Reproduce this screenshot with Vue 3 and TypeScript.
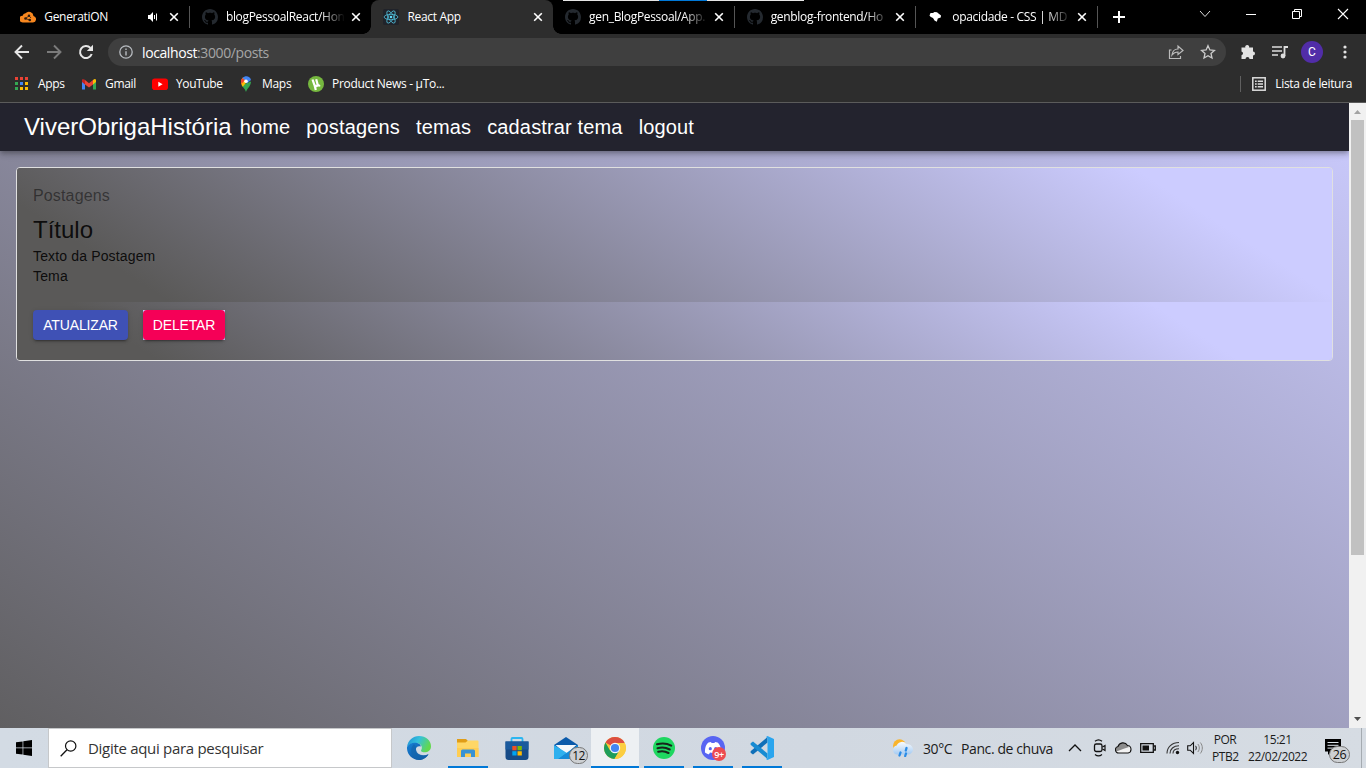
<script setup lang="ts">
interface Tab {
  title: string
  icon: 'cloud' | 'github' | 'react' | 'mdn'
  active?: boolean
  audio?: boolean
  divider?: boolean
}

const tabs: Tab[] = [
  { title: 'GeneratiON', icon: 'cloud', audio: true, divider: true },
  { title: 'blogPessoalReact/Hon', icon: 'github' },
  { title: 'React App', icon: 'react', active: true },
  { title: 'gen_BlogPessoal/App.', icon: 'github', divider: true },
  { title: 'genblog-frontend/Ho', icon: 'github', divider: true },
  { title: 'opacidade - CSS | MD', icon: 'mdn', divider: true },
]

const appDots = ['#ea4335', '#ea4335', '#ea4335', '#34a853', '#4285f4', '#fbbc05', '#34a853', '#fbbc05', '#fbbc05']
const links: string[] = ['home', 'postagens', 'temas', 'cadastrar tema', 'logout']
const githubPath =
  'M8 0C3.58 0 0 3.58 0 8c0 3.54 2.29 6.53 5.47 7.59.4.07.55-.17.55-.38 0-.19-.01-.82-.01-1.49-2.01.37-2.53-.49-2.69-.94-.09-.23-.48-.94-.82-1.13-.28-.15-.68-.52-.01-.53.63-.01 1.08.58 1.23.82.72 1.21 1.87.87 2.33.66.07-.52.28-.87.51-1.07-1.78-.2-3.64-.89-3.64-3.95 0-.87.31-1.59.82-2.15-.08-.2-.36-1.02.08-2.12 0 0 .67-.21 2.2.82.64-.18 1.32-.27 2-.27s1.36.09 2 .27c1.53-1.04 2.2-.82 2.2-.82.44 1.1.16 1.92.08 2.12.51.56.82 1.27.82 2.15 0 3.07-1.87 3.75-3.65 3.95.29.25.54.73.54 1.48 0 1.07-.01 1.93-.01 2.2 0 .21.15.46.55.38A8.01 8.01 0 0 0 16 8c0-4.42-3.58-8-8-8z'
</script>

<template>
  <div class="screen">
    <header class="tabstrip">
      <div v-for="tab in tabs" :key="tab.title" class="tab" :class="{ active: tab.active, divider: tab.divider }">
        <svg v-if="tab.icon === 'cloud'" class="fav" viewBox="0 0 16 16">
          <path d="M3 13.500A3.400 3.400 0 0 1 2.600 6.700 3.400 3.400 0 0 1 5.500 4.200 4.600 4.600 0 0 1 13.500 7 3.300 3.300 0 0 1 13 13.500z" fill="#f7871f" />
          <path d="M5.500 9.500L9 6.800L11 9M5.500 9.500L9.500 11" fill="none" stroke="#2b1b10" stroke-width=".8" />
          <circle cx="5.500" cy="9.500" r="1.300" fill="#2b1b10" /><circle cx="9" cy="6.800" r="1.200" fill="#2b1b10" /><circle cx="9.800" cy="11" r="1.300" fill="#2b1b10" />
        </svg>
        <svg v-else-if="tab.icon === 'github'" class="fav" viewBox="0 0 16 16"><path :d="githubPath" fill="#24292f" /></svg>
        <svg v-else-if="tab.icon === 'react'" class="fav" viewBox="0 0 16 16">
          <rect width="16" height="16" rx="1.500" fill="#20232a" />
          <g fill="none" stroke="#50bfdb" stroke-width=".8">
            <ellipse cx="8" cy="8" rx="6.900" ry="2.700" /><ellipse cx="8" cy="8" rx="6.900" ry="2.700" transform="rotate(60 8 8)" /><ellipse cx="8" cy="8" rx="6.900" ry="2.700" transform="rotate(120 8 8)" />
          </g>
          <circle cx="8" cy="8" r="1.300" fill="#61dafb" />
        </svg>
        <svg v-else class="fav" viewBox="0 0 16 16"><path d="M1.500 6.500L2.500 4L5 4L6.500 3L9 3.300L10.500 4.500L13 6.500L12.700 8.500L9.800 9.500L8.800 12.800L6.500 11.500L5 9L2.500 7.800z" fill="#fff" /></svg>
        <span class="tab-title" :class="{ fade: !tab.active && !tab.audio }">{{ tab.title }}</span>
        <svg v-if="tab.audio" class="audio" viewBox="0 0 12 12">
          <path d="M1 4h2l3-3v10L3 8H1z" fill="#fff" /><path d="M7.500 4v4M9.500 2.500v7" stroke="#fff" stroke-width="1" />
        </svg>
        <svg class="close" viewBox="0 0 10 10"><path d="M1.200 1.200L8.800 8.800M8.800 1.200L1.200 8.800" stroke="#fff" stroke-width="1.600" /></svg>
      </div>
      <svg class="plus" viewBox="0 0 12 12"><path d="M6 0v12M0 6h12" stroke="#fff" stroke-width="2" /></svg>
      <div class="window-controls">
        <svg viewBox="0 0 12 12"><path d="M1 3l5 5.500L11 3" fill="none" stroke="#ddd" /></svg>
        <svg viewBox="0 0 12 12"><path d="M1 6.500h10" stroke="#fff" /></svg>
        <svg viewBox="0 0 12 12"><path d="M1.500 3.500h7v7h-7zM3.500 3.500v-2h7v7h-2" fill="none" stroke="#fff" /></svg>
        <svg viewBox="0 0 12 12"><path d="M1 1l10 10M11 1L1 11" stroke="#fff" stroke-width="1.100" /></svg>
      </div>
      <div class="sliver"></div>
    </header>

    <div class="toolbar">
      <svg class="nav-ic" viewBox="0 0 16 16"><path d="M15 8H2M8 1.500L1.500 8L8 14.500" fill="none" stroke="#e6e6e6" stroke-width="1.900" /></svg>
      <svg class="nav-ic" viewBox="0 0 16 16"><path d="M1 8h13M8 1.500L14.500 8L8 14.500" fill="none" stroke="#7b7b7b" stroke-width="1.900" /></svg>
      <svg class="nav-ic" viewBox="0 0 16 16"><path d="M13.700 10A6 6 0 1 1 12.400 3.900" fill="none" stroke="#e6e6e6" stroke-width="2" /><path d="M15 .8V7H8.800z" fill="#e6e6e6" /></svg>
      <div class="omnibox">
        <svg class="info" viewBox="0 0 14 14"><circle cx="7" cy="7" r="6.200" fill="none" stroke="#b8bcc1" stroke-width="1.300" /><path d="M7 6.200v4.300M7 3.400v1.500" stroke="#b8bcc1" stroke-width="1.400" /></svg>
        <span class="url"><b>localhost</b>:3000/posts</span>
        <svg class="share" viewBox="0 0 16 16"><path d="M3.500 6H1.500v8.500h11V12" fill="none" stroke="#bbb" stroke-width="1.200" /><path d="M4 11c.5-4 3-6 6-6V2l5 4.500L10 10.500V8C7.500 8 5.500 9 4 11z" fill="none" stroke="#bbb" stroke-width="1.200" /></svg>
        <svg class="star" viewBox="0 0 16 16"><path d="M8 1.700l1.900 4.200 4.500.5-3.400 3 1 4.600L8 11.700 4 14l1-4.600-3.400-3 4.500-.5z" fill="none" stroke="#ccc" stroke-width="1.300" /></svg>
      </div>
      <svg class="ext" viewBox="0 0 16 16"><path d="M1.500 3.500h3.800a2 2 0 1 1 3.800 0h3.900v3.900a2 2 0 1 1 0 4V15H9.500a2 2 0 0 0-4 0h-4v-3.700a2 2 0 0 0 0-3.900z" fill="#e2e2e2" /></svg>
      <svg class="media" viewBox="0 0 16 14"><path d="M0 2h10M0 6h10M0 10h6" stroke="#ddd" stroke-width="1.700" /><path d="M12.500 11V2H16" fill="none" stroke="#ddd" stroke-width="1.800" /><circle cx="11" cy="11" r="2.400" fill="#ddd" /></svg>
      <div class="profile">C</div>
      <svg class="menu" viewBox="0 0 4 14"><g fill="#e2e2e2"><circle cx="2" cy="2" r="1.600" /><circle cx="2" cy="7" r="1.600" /><circle cx="2" cy="12" r="1.600" /></g></svg>
    </div>

    <div class="bookmarks">
      <div class="bm apps"><span class="dots"><i v-for="(c, i) in appDots" :key="i" :style="{ background: c }"></i></span><span>Apps</span></div>
      <div class="bm gmail">
        <svg viewBox="0 0 16 16"><path d="M1 3.500v10h3V6z" fill="#4285f4" /><path d="M12 6v7.500h3v-10z" fill="#34a853" /><path d="M1 3.500V6l3 2.500V4L3 3.200z" fill="#c5221f" /><path d="M4 4l4 3.200L12 4v4.500l-4 3-4-3z" fill="#ea4335" /><path d="M12 4v4.500L15 6V3.600L13.500 3z" fill="#fbbc04" /></svg><span>Gmail</span>
      </div>
      <div class="bm youtube">
        <svg viewBox="0 0 16 16"><rect x="0" y="2.500" width="16" height="11.500" rx="2.800" fill="#f00" /><path d="M6.300 5.800v5L10.600 8.300z" fill="#fff" /></svg><span>YouTube</span>
      </div>
      <div class="bm maps">
        <svg viewBox="0 0 16 16"><path d="M3.500 9C5 11.500 7 12.500 8 16c1-3.500 5-6 5-10.500L9 7z" fill="#34a853" /><path d="M3 6c0 2 .8 3.400 1.800 4.700L9.500 5 5 1.500C3.800 2.500 3 4 3 6z" fill="#fbbc04" /><path d="M3 5.500C3 4 3.700 2.700 4.500 2L7 4 3.500 8z" fill="#ea4335" /><path d="M4.500 2C7-.8 12-.4 13 4L9 7.500 7 4z" fill="#4285f4" /><circle cx="8" cy="5.200" r="1.800" fill="#fff" /></svg><span>Maps</span>
      </div>
      <div class="bm utorrent">
        <svg viewBox="0 0 16 16"><circle cx="8" cy="8" r="8" fill="#76b83f" /><path d="M4.500 3.500l1.800 5.200c.8 2.200 3.600 1.600 3.200-.6L8.200 3.300M9.300 7.500c.6 2 1.600 2.500 2.700 1.700M6.500 9l1.300 5" fill="none" stroke="#fff" stroke-width="2.200" /></svg><span>Product News - µTo...</span>
      </div>
      <div class="reading">
        <svg viewBox="0 0 14 14"><rect x=".8" y=".8" width="12.400" height="12.400" fill="none" stroke="#ddd" stroke-width="1.500" /><path d="M3 4.300h1.700M3 7h1.700M3 9.700h1.700M5.700 4.300h5.300M5.700 7h5.300M5.700 9.700h5.300" stroke="#ddd" stroke-width="1.500" /></svg>
        <span>Lista de leitura</span>
      </div>
    </div>

    <div class="viewport">
      <div class="page">
        <nav class="appbar">
          <span class="brand">ViverObrigaHistória</span>
          <a v-for="link in links" :key="link">{{ link }}</a>
        </nav>
        <main class="main">
          <article class="card">
            <div class="card-content">
              <p class="kicker">Postagens</p>
              <h2>Título</h2>
              <p>Texto da Postagem</p>
              <p>Tema</p>
            </div>
            <div class="card-actions">
              <button class="btn primary">ATUALIZAR</button>
              <span class="delete-wrap"><button class="btn secondary">DELETAR</button></span>
            </div>
          </article>
        </main>
      </div>
      <div class="scrollbar">
        <svg viewBox="0 0 17 17"><path d="M5 11l3.500-4L12 11z" fill="#a3a3a3" /></svg>
        <div class="thumb"></div>
        <svg class="down" viewBox="0 0 17 17"><path d="M5 6l3.500 4L12 6z" fill="#505050" /></svg>
      </div>
    </div>

    <footer class="taskbar">
      <div class="start"><svg viewBox="0 0 16 16"><path d="M0 2.300l6.600-.9v6.200H0zM7.300 1.300L16 0v7.600H7.300zM0 8.300h6.600v6.300L0 13.700zM7.300 8.300H16V16l-8.700-1.300z" fill="#000" /></svg></div>
      <div class="search">
        <svg viewBox="0 0 17 17"><circle cx="10.700" cy="6" r="5.200" fill="none" stroke="#111" stroke-width="1.200" /><path d="M7 9.800L.7 16.200" stroke="#111" stroke-width="1.300" /></svg>
        <span>Digite aqui para pesquisar</span>
      </div>
      <div class="tasks">
        <div class="task">
          <svg viewBox="0 0 24 24">
            <defs>
              <linearGradient id="edgeTop" x1="0" y1="0" x2="1" y2=".4"><stop offset="0" stop-color="#1c8ad4" /><stop offset=".5" stop-color="#35c1dc" /><stop offset="1" stop-color="#62d84f" /></linearGradient>
              <linearGradient id="edgeLow" x1="0" y1="0" x2="1" y2="1"><stop offset="0" stop-color="#1683d8" /><stop offset="1" stop-color="#124a91" /></linearGradient>
            </defs>
            <path d="M0 11C1 4 6 0 12 0c7 0 12 4.500 12 10.200 0 4-3 6-6.500 6-3 0-4.200-1.400-3-2.800C16 10 13 7 9 7 5 7 1.500 8.500 0 11z" fill="url(#edgeTop)" />
            <path d="M0 11C2 7.500 5.500 6.300 9 6.800c3 .4 4.600 2 5 3.700C10 9.500 8.500 12 9 14.500c.7 4 6 6.500 12.500 3.700-.8 2-5 5.800-9.500 5.800C5 24-.5 18 0 11z" fill="url(#edgeLow)" />
            <path d="M7 8c-4 4-4 11 2 15.500 6 1.500 10-1.500 12.500-5.300C15 21 8 18 9 11z" fill="#1467ae" opacity=".7" />
          </svg>
        </div>
        <div class="task open">
          <svg viewBox="0 0 24 24"><path d="M1 3h9l2 2v4H1z" fill="#e09d17" /><path d="M1 6.500h8.500L12 4.500h9.500a1 1 0 0 1 1 1V21H1z" fill="#ffd766" /><path d="M1 12h21.500v9H1z" fill="#ffcd52" /><path d="M5 21v-6a1.500 1.500 0 0 1 1.500-1.500h11A1.500 1.500 0 0 1 19 15v6h-4v-3.500H9V21z" fill="#3892d4" /></svg>
        </div>
        <div class="task">
          <svg viewBox="0 0 24 24"><path d="M6.500 6V3a1 1 0 0 1 1-1h9a1 1 0 0 1 1 1v3" fill="none" stroke="#2cb6f0" stroke-width="1.800" /><path d="M.5 5.500h23V21a3 3 0 0 1-3 3h-17a3 3 0 0 1-3-3z" fill="#174b87" /><path d="M.5 5.500h23v8H.5z" fill="#1b5a9d" /><path d="M7.300 10h4.300v4.300H7.300z" fill="#f25022" /><path d="M12.500 10h4.300v4.300h-4.300z" fill="#7fba00" /><path d="M7.300 15.200h4.300v4.300H7.300z" fill="#00a4ef" /><path d="M12.500 15.200h4.300v4.300h-4.300z" fill="#ffb900" /></svg>
        </div>
        <div class="task">
          <svg viewBox="0 0 24 24"><path d="M0 9L12 1l12 8v14H0z" fill="#0b5aaa" /><path d="M1.500 9h21L12 18z" fill="#f4f7fa" /><path d="M0 9l13 8L5 23H0z" fill="#2eb0ee" /><path d="M24 9L4 23h20z" fill="#168bd8" /></svg>
          <span class="count mail">12</span>
        </div>
        <div class="task open current">
          <svg viewBox="0 0 24 24"><circle cx="12" cy="12" r="11" fill="#f9c938" /><path d="M12 12L2.470 6.500A11 11 0 0 1 21.530 6.500L21 7H12z" fill="#dc4e41" /><path d="M2.470 6.500A11 11 0 0 0 11.500 23l5-8.500L12 12 7 14.500z" fill="#1e9d5a" /><path d="M12 7h9.700a11 11 0 0 1-10.200 16l5-8.500z" fill="#fcce41" /><circle cx="12" cy="12" r="5.200" fill="#f4f7fc" /><circle cx="12" cy="12" r="4.100" fill="#4486f2" /></svg>
        </div>
        <div class="task open">
          <svg viewBox="0 0 24 24"><circle cx="12" cy="12" r="11" fill="#1ed760" /><path d="M5 8.300c5-1.400 10-1 14.200 1.300M5.500 12.200c4-1.200 8.500-.8 12.200 1.300M6.200 15.800c3.700-1 7-.7 10.300 1.200" fill="none" stroke="#17251b" stroke-width="2.100" stroke-linecap="round" /></svg>
        </div>
        <div class="task open">
          <svg viewBox="0 0 24 24"><circle cx="12" cy="12" r="12" fill="#5865f2" /><path d="M7.500 6.500C5 8 3.800 12.500 4 16.500c1.500 1.200 3 1.700 4 1.800l1-1.700c2 .6 4 .6 6 0l1 1.700c1-.1 2.500-.6 4-1.800.2-4-1-8.500-3.500-10L14 6l-.5 1h-3L10 6z" fill="#fff" /><circle cx="9.300" cy="12.700" r="1.600" fill="#5865f2" /><circle cx="14.700" cy="12.700" r="1.600" fill="#5865f2" /></svg>
          <span class="count discord">9+</span>
        </div>
        <div class="task open">
          <svg viewBox="0 0 24 24"><path d="M17.500 1v5.600L3 18.500.6 16.800v-1.500z" fill="#0f6fb8" /><path d="M.6 8.700v-1.500L3 5.500l14.500 12V23z" fill="#178bd2" /><path d="M17.500 0L24 3v18l-6.500 3-1.500-1 1.500-1V2L16 1z" fill="#2aa5ee" /></svg>
        </div>
      </div>
      <div class="tray">
        <svg class="weather" viewBox="0 0 22 18">
          <defs><linearGradient id="cloud" x1="0" y1="0" x2="0" y2="1"><stop offset="0" stop-color="#f8fbff" /><stop offset="1" stop-color="#a5cbf2" /></linearGradient></defs>
          <circle cx="7.500" cy="6.800" r="6.500" fill="#f9b42c" /><path d="M5.500 15.500a4.500 4.500 0 0 1-.8-8.900A5.500 5.500 0 0 1 14.500 5.300 5.200 5.200 0 0 1 17 15.500z" fill="url(#cloud)" /><path d="M8.500 13.500l-1 3M14.500 9l-.7 2.500M14 14.500l-.8 2.500" stroke="#2b8ce6" stroke-width="2.300" stroke-linecap="round" />
        </svg>
        <span class="temp">30°C</span><span class="forecast">Panc. de chuva</span>
        <svg class="chev" viewBox="0 0 14 8"><path d="M1 7l6-6 6 6" fill="none" stroke="#111" stroke-width="1.300" /></svg>
        <svg class="meet" viewBox="0 0 14 18"><rect x="1.500" y="5" width="7.500" height="7.500" rx="1.800" fill="none" stroke="#111" stroke-width="1.300" /><path d="M9.500 8l2.500-1.500v5L9.500 10M2 2.200c2-1.600 5-1.600 7 0M2 15.500c2 1.600 5 1.600 7 0" fill="none" stroke="#111" stroke-width="1.200" /></svg>
        <svg class="onedrive" viewBox="0 0 17 12"><path d="M4 11A3.300 3.300 0 0 1 3 4.500 5.200 5.200 0 0 1 12.500 3.500 3.800 3.800 0 0 1 13 11z" fill="#f2f2f2" /><path d="M1.500 9.500A3.300 3.300 0 0 1 3 4.500 5.200 5.200 0 0 1 12.500 3.500L14 5 8 7z" fill="#8c8c8c" /><path d="M4 11A3.300 3.300 0 0 1 3 4.500 5.200 5.200 0 0 1 12.500 3.500 3.800 3.800 0 0 1 13 11z" fill="none" stroke="#111" stroke-width="1.100" /></svg>
        <svg class="battery" viewBox="0 0 16 10"><path d="M.7.700h12.600v8.600H.7zM14 3h1.300v4H14" fill="none" stroke="#111" stroke-width="1.300" /><path d="M2.500 2.500H9v5H2.500z" fill="#111" /></svg>
        <svg class="wifi" viewBox="0 0 14 14"><g fill="none" stroke="#333" stroke-width="1.100"><path d="M1 12.500C1 6 6 1.500 13 1.500M4 12.500c0-4.500 3.500-7.700 9-7.700M7 12.500c0-3 2-4.700 6-4.700" /></g><circle cx="11.500" cy="11.500" r="1.700" fill="#111" /></svg>
        <svg class="volume" viewBox="0 0 17 14"><path d="M.7 4.800h2.500L6.500 1.500v11L3.200 9.200H.7z" fill="none" stroke="#111" stroke-width="1.100" /><path d="M8.500 4.800c1 1.200 1 3.200 0 4.400" fill="none" stroke="#111" /><path d="M10.800 3c2 2.300 2 5.700 0 8M13.300 1.500c2.700 3.200 2.700 7.800 0 11" fill="none" stroke="#888" /></svg>
        <div class="stack lang"><span>POR</span><span>PTB2</span></div>
        <div class="stack clock"><span>15:21</span><span>22/02/2022</span></div>
        <div class="notice">
          <svg viewBox="0 0 16 16"><path d="M0 0h16v12.500H6L3 16v-3.500H0z" fill="#000" /><path d="M2.500 3.500h11M2.500 6.300h11M2.500 9.100h7" stroke="#dce3ea" stroke-width="1" /></svg>
          <span class="count bell">26</span>
        </div>
        <div class="peek"></div>
      </div>
    </footer>
  </div>
</template>

<style>
body { margin: 0; overflow: hidden; }
</style>

<style scoped>
* { box-sizing: border-box; }
.screen { width: 1366px; height: 768px; display: flex; flex-direction: column; overflow: hidden; font-family: "Open Sans", "Noto Sans", sans-serif; font-size: 12px; color: #fff; }
svg { display: block; flex: none; }
.tabstrip { height: 34px; background: #000; display: flex; align-items: center; padding-left: 8.300px; position: relative; flex: none; }
.tab { width: 181.600px; height: 34px; display: flex; align-items: center; padding: 0 10px 0 12px; position: relative; flex: none; }
.tab.active { background: #2d2d2d; border-radius: 8px 8px 0 0; z-index: 1; }
.tab.active::before, .tab.active::after { content: ""; position: absolute; bottom: 0; width: 8px; height: 8px; }
.tab.active::before { left: -8px; background: radial-gradient(circle at 0 0, transparent 7.500px, #2d2d2d 8px); }
.tab.active::after { right: -8px; background: radial-gradient(circle at 100% 0, transparent 7.500px, #2d2d2d 8px); }
.tab.divider { border-right: 1px solid #4b4b4b; border-image: linear-gradient(transparent 7px, #555 7px, #555 27px, transparent 27px) 1; border-width: 0 1px 0 0; }
.fav { width: 16px; height: 16px; }
.tab-title { width: 119px; margin-left: 8px; overflow: hidden; white-space: nowrap; letter-spacing: -.32px; line-height: 18px; flex: none; }
.tab:has(.audio) .tab-title { width: 103px; }
.fade { mask-image: linear-gradient(90deg, #000 94px, transparent 119px); }
.audio { width: 12px; height: 12px; }
.close { width: 10px; height: 10px; margin-left: auto; }
.plus { width: 12px; height: 12px; margin-left: 15.500px; }
.window-controls { display: flex; gap: 34px; margin-left: auto; padding-right: 17px; margin-top: -6px; }
.window-controls svg { width: 12px; height: 12px; }
.sliver { position: absolute; left: 563px; top: 0; width: 241px; height: 1px; background: linear-gradient(90deg, #e6e6e6 96px, #0078d7 96px, #0078d7 144px, #e6e6e6 144px); z-index: 2; }
.toolbar { height: 36px; background: #2d2d2d; display: flex; align-items: center; padding: 0 19px 0 14px; flex: none; }
.nav-ic { width: 16px; height: 16px; margin-right: 16px; }
.nav-ic:nth-child(3) { margin-right: 14px; }
.omnibox { width: 1118px; height: 28px; border-radius: 14px; background: #3f3f3f; display: flex; align-items: center; padding: 0 10px 0 11px; flex: none; }
.info { width: 14px; height: 14px; }
.url { font-size: 14px; color: #a6a6a6; margin-left: 9px; letter-spacing: -.4px; }
.url b { color: #fff; font-weight: 400; }
.share { width: 16px; height: 16px; margin-left: auto; }
.star { width: 16px; height: 16px; margin-left: 16px; }
.ext { width: 16px; height: 16px; margin-left: 14px; }
.media { width: 16px; height: 14px; margin-left: 16px; }
.profile { width: 22px; height: 22px; border-radius: 50%; background: #512da8; text-align: center; line-height: 22px; font-family: Roboto, sans-serif; margin-left: 13px; }
.menu { width: 4px; height: 14px; margin-left: auto; }
.bookmarks { height: 33px; background: #2d2d2d; border-bottom: 1px solid #5b5b5b; display: flex; align-items: center; padding: 0 14px 5px; letter-spacing: -.3px; white-space: nowrap; flex: none; }
.bm { display: flex; align-items: center; gap: 7px; }
.bm svg { width: 16px; height: 16px; }
.bm.apps { width: 67px; gap: 10px; }
.bm.gmail { width: 71px; gap: 8px; }
.bm.youtube { width: 86px; gap: 8px; letter-spacing: -.4px; }
.bm.maps { width: 70px; gap: 8px; }
.bm.utorrent { gap: 8px; }
.dots { display: grid; grid-template-columns: repeat(3, 3px); gap: 2px; padding-left: 1px; }
.dots i { height: 3px; }
.reading { margin-left: auto; display: flex; align-items: center; gap: 9px; border-left: 1px solid #606060; height: 16px; padding-left: 11px; letter-spacing: -.35px; }
.reading svg { width: 14px; height: 14px; }
.viewport { height: 625px; display: flex; flex: none; }
.page { width: 1349px; height: 625px; background: linear-gradient(35deg, #605f61, #cbcbfe); font-family: "Liberation Sans", Arial, sans-serif; overflow: hidden; }
.appbar { height: 48px; background: #23232e; display: flex; align-items: center; padding-left: 24px; font-size: 20px; letter-spacing: .15px; position: relative; box-shadow: 0 2px 4px -1px rgba(0,0,0,.2), 0 4px 5px rgba(0,0,0,.14), 0 1px 10px rgba(0,0,0,.12); }
.brand { font-size: 24px; letter-spacing: 0; }
.appbar a { margin: 0 8px; }
.main { padding: 16px; }
.card { border: 1px solid #e0e0e0; border-radius: 4px; overflow: hidden; color: rgba(0,0,0,.87); height: 194px; }
.card-content { height: 134px; padding: 16px; background: linear-gradient(33deg, #5a5958 10%, #ccf 87%); }
.card-actions { height: 58px; padding: 8px 16px; display: flex; gap: 15px; align-items: flex-start; background: linear-gradient(33deg, #5a5958 10%, #ccf 87%); }
.card p, .card h2 { margin: 0; font-weight: 400; }
.card p { font-size: 14px; line-height: 20px; letter-spacing: .01071em; }
.card .kicker { font-size: 16px; line-height: 24px; margin-bottom: 5.600px; color: rgba(0,0,0,.48); letter-spacing: .00938em; }
.card h2 { font-size: 24px; line-height: 32px; }
.btn { border: 0; border-radius: 4px; padding: 4px 0; height: 30px; text-align: center; font: 500 14px/20px "Liberation Sans", Arial, sans-serif; letter-spacing: -.15px; color: #fff; white-space: nowrap; display: block; box-shadow: 0 3px 1px -2px rgba(0,0,0,.2), 0 2px 2px rgba(0,0,0,.14), 0 1px 5px rgba(0,0,0,.12); }
.primary { background: #3f51b5; width: 95px; }
.secondary { background: #f50057; width: 82px; }
.delete-wrap { background: #ccf; }
.scrollbar { width: 17px; background: #f1f1f1; display: flex; flex-direction: column; }
.scrollbar svg { width: 17px; height: 17px; }
.thumb { width: 13px; height: 435px; margin: 0 2px; background: #c1c1c1; }
.down { margin-top: auto; }
.taskbar { height: 40px; background: linear-gradient(90deg, #d3dbe4, #d1d8e1 60%, #d6dce3); display: flex; color: #1b1b1b; flex: none; }
.start { width: 48px; display: flex; align-items: center; justify-content: center; }
.start svg { width: 16px; height: 16px; }
.search { width: 344px; height: 40px; background: #fff; border: 1px solid #c6c8ca; display: flex; align-items: center; padding-left: 11px; gap: 11px; font-size: 15px; letter-spacing: -.3px; color: #333; }
.search svg { width: 17px; height: 17px; }
.tasks { display: flex; margin-left: 2px; }
.task { width: 49px; height: 40px; display: flex; justify-content: center; align-items: center; position: relative; border: solid transparent; border-width: 0 4px; }
.task svg { width: 24px; height: 24px; }
.open { background: linear-gradient(#0078d7, #0078d7) center bottom / 40px 2px no-repeat; }
.open.current { background: linear-gradient(#0078d7, #0078d7) center bottom / 100% 2px no-repeat, #edf0f3; border-width: 0; width: 48px; margin-left: 1px; }
.count { position: absolute; display: flex; align-items: center; justify-content: center; color: #111; border: 1px solid #777; border-radius: 10px; background: #cdd0d3; }
.mail { width: 19px; height: 17px; right: -2px; bottom: 4px; font-size: 12px; letter-spacing: -.6px; }
.discord { width: 14px; height: 14px; right: 1px; bottom: 7px; background: #ed4b50; border: 0; color: #fff; font-size: 9px; font-weight: 600; letter-spacing: -.3px; transform: translateX(-6px); }
.tray { margin-left: auto; display: flex; align-items: center; font-size: 14px; }
.weather { width: 22px; height: 18px; }
.temp { width: 30px; margin-left: 9px; letter-spacing: -.4px; white-space: nowrap; }
.forecast { width: 92px; margin-left: 8px; letter-spacing: -.4px; white-space: nowrap; }
.chev { width: 14px; height: 8px; margin-left: 15px; }
.meet { width: 14px; height: 18px; margin-left: 11px; }
.onedrive { width: 17px; height: 12px; margin-left: 8px; }
.battery { width: 16px; height: 10px; margin-left: 8px; }
.wifi { width: 14px; height: 14px; margin-left: 10px; }
.volume { width: 17px; height: 14px; margin-left: 7px; }
.stack { display: flex; flex-direction: column; font-size: 12px; line-height: 17px; text-align: center; white-space: nowrap; letter-spacing: -.45px; padding-bottom: 1px; }
.lang { width: 26px; margin-left: 8px; }
.clock { width: 59px; margin-left: 10px; }
.notice { width: 27px; height: 24px; margin-left: 18px; position: relative; }
.notice svg { width: 16px; height: 16px; margin-top: 3px; }
.bell { width: 21px; height: 17px; left: 4px; top: 10px; font-size: 12.500px; letter-spacing: -.4px; }
.peek { width: 5px; height: 40px; border-left: 1px solid #a5abb1; margin-left: 9px; }
</style>
